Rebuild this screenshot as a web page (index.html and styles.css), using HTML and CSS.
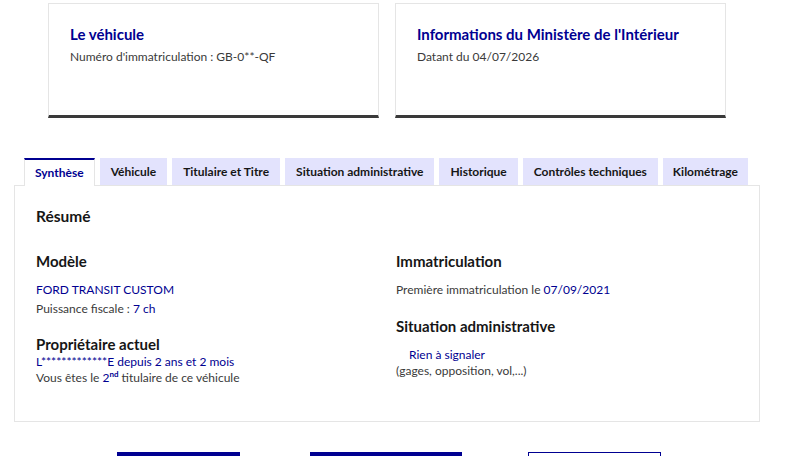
FILE: index.html
```html
<!DOCTYPE html>
<html lang="fr">
<head>
<meta charset="utf-8">
<link rel="stylesheet" href="styles.css">
</head>
<body>
<div class="cards">
  <div class="card">
    <h2 class="card-title">Le véhicule</h2>
    <p class="card-desc">Numéro d'immatriculation : GB-0**-QF</p>
  </div>
  <div class="card">
    <h2 class="card-title">Informations du Ministère de l'Intérieur</h2>
    <p class="card-desc">Datant du 04/07/2026</p>
  </div>
</div>

<div class="tabs">
  <ul class="tab-list">
    <li class="tab active">Synthèse</li>
    <li class="tab">Véhicule</li>
    <li class="tab">Titulaire et Titre</li>
    <li class="tab">Situation administrative</li>
    <li class="tab">Historique</li>
    <li class="tab">Contrôles techniques</li>
    <li class="tab">Kilométrage</li>
  </ul>
  <div class="panel">
    <h3 class="panel-title">Résumé</h3>
    <div class="cols">
      <div class="col">
        <h4 class="sec-title">Modèle</h4>
        <p class="line first blue">FORD TRANSIT CUSTOM</p>
        <p class="line spaced">Puissance fiscale : <span class="blue">7 ch</span></p>
        <h4 class="sec-title tight">Propriétaire actuel</h4>
        <p class="line blue">L*************E depuis 2 ans et 2 mois</p>
        <p class="line">Vous êtes le <span class="blue">2<sup>nd</sup></span> titulaire de ce véhicule</p>
      </div>
      <div class="col">
        <h4 class="sec-title">Immatriculation</h4>
        <p class="line first">Première immatriculation le <span class="blue">07/09/2021</span></p>
        <h4 class="sec-title mid">Situation administrative</h4>
        <p class="line first blue indent">Rien à signaler</p>
        <p class="line">(gages, opposition, vol,...)</p>
      </div>
    </div>
  </div>
</div>

<div class="actions">
  <div class="btn primary b1"></div>
  <div class="btn primary b2"></div>
  <div class="btn secondary b3"></div>
</div>
</body>
</html>
```

FILE: styles.css
```css
* { box-sizing: border-box; }
html, body { margin: 0; padding: 0; background: #fff; }
body {
  font-family: Lato, "Open Sans", sans-serif;
  color: #3a3a3a;
  width: 800px;
  height: 456px;
  overflow: hidden;
}
.cards {
  display: flex;
  gap: 16px;
  padding: 3px 0 0 48px;
}
.card {
  width: 331px;
  height: 115px;
  border: 1px solid #e5e5e5;
  border-bottom: 3px solid #3a3a3a;
  padding: 20px 21px 0;
}
.card-title {
  margin: 0;
  font-size: 15px;
  font-weight: 700;
  color: #000091;
  line-height: 20px;
}
.card-desc {
  margin: 5px 0 0;
  font-size: 12px;
  line-height: 16px;
  color: #3a3a3a;
}
.tabs {
  margin: 40px 0 0 14px;
  width: 746px;
}
.tab-list {
  list-style: none;
  margin: 0;
  padding: 0 0 0 10px;
  display: flex;
  gap: 5px;
}
.tab {
  height: 27px;
  padding: 0 11px;
  background: #e3e3fd;
  font-size: 12px;
  font-weight: 700;
  color: #161616;
  line-height: 27px;
  white-space: nowrap;
}
.tab.active {
  background: #fff;
  color: #000091;
  border-top: 2px solid #000091;
  border-left: 1px solid #e5e5e5;
  border-right: 1px solid #e5e5e5;
  padding: 0 10px;
  line-height: 25px;
  margin-bottom: -1px;
  height: 28px;
  position: relative;
}
.tab:last-child { padding: 0 10px; }
.panel {
  border: 1px solid #e5e5e5;
  height: 237px;
  padding: 18px 21px 0;
}
.panel-title {
  margin: 0;
  font-size: 15.5px;
  font-weight: 700;
  color: #161616;
  line-height: 24px;
}
.cols {
  display: grid;
  grid-template-columns: 360px 1fr;
  margin-top: 23px;
}
.sec-title {
  margin: 0;
  font-size: 15px;
  font-weight: 700;
  color: #161616;
  line-height: 20px;
}
.sec-title.tight { margin-top: 17px; }
.sec-title.mid { margin-top: 18px; }
.line {
  margin: 0;
  font-size: 12px;
  line-height: 16px;
  color: #3a3a3a;
}
.line.first { margin-top: 11px; }
.line.spaced { margin-top: 3px; }
.blue, .line.blue { color: #000091; }
.indent { padding-left: 13px; }
sup { font-size: 8px; line-height: 0; vertical-align: 5px; font-weight: 700; }
.actions {
  margin-top: 30px;
  position: relative;
  height: 10px;
}
.btn { position: absolute; top: 0; height: 20px; }
.primary { background: #000091; }
.secondary { border: 1px solid #000091; }
.b1 { left: 117px; width: 123px; }
.b2 { left: 310px; width: 152px; }
.b3 { left: 528px; width: 133px; }
```
